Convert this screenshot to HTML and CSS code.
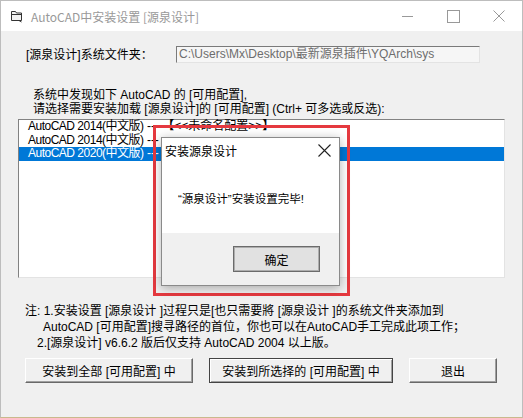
FILE: index.html
```html
<!DOCTYPE html>
<html lang="zh-CN">
<head>
    <meta charset="UTF-8">
    <title>AutoCAD中安装设置 [源泉设计]</title>
    <link rel="stylesheet" href="styles.css">
</head>
<body>
    <div class="window">
        <div class="titlebar">
            <svg class="app-icon" width="14" height="14" viewBox="0 0 14 14">
                <path d="M1.5 2.5h4l1 1.5h5v7.5h-10z" fill="#f3f3f3" stroke="#333" stroke-width="1"/>
                <path d="M1.5 5.5h10" stroke="#333" stroke-width="1"/>
                <path d="M9 11.5l2.5 1.5" stroke="#333" stroke-width="1"/>
            </svg>
            <span class="title">AutoCAD中安装设置 [源泉设计]</span>
            <div class="controls">
                <span class="ctl ctl-min"></span>
                <span class="ctl ctl-max"></span>
                <span class="ctl ctl-close">
                    <svg width="12" height="12" viewBox="0 0 12 12"><path d="M0.5 0.5l11 11M11.5 0.5l-11 11" stroke="#999" stroke-width="1"/></svg>
                </span>
            </div>
        </div>

        <div class="client">
            <div class="folder-row">
                <span class="folder-label">[源泉设计]系统文件夹：</span>
                <div class="path">C:\Users\Mx\Desktop\最新源泉插件\YQArch\sys</div>
            </div>

            <p class="prompt">系统中发现如下 AutoCAD 的 [可用配置],<br>请选择需要安装加载 [源泉设计]的 [可用配置] (Ctrl+ 可多选或反选):</p>

            <div class="listbox">
                <div class="item"><span class="name">AutoCAD 2014(中文版)</span> --- <b>【</b>&lt;&lt;未命名配置&gt;&gt;<b>】</b></div>
                <div class="item"><span class="name">AutoCAD 2014(中文版)</span> ---</div>
                <div class="item selected"><span class="name">AutoCAD 2020(中文版)</span> ---</div>
            </div>

            <div class="notes">
                <div>注: 1.安装设置 [源泉设计 ]过程只是[也只需要將 [源泉设计 ]的系统文件夹添加到</div>
                <div class="indent-1">AutoCAD [可用配置]搜寻路径的首位，你也可以在AutoCAD手工完成此项工作；</div>
                <div class="indent-2">2.[源泉设计] v6.6.2 版后仅支持 AutoCAD 2004 以上版。</div>
            </div>

            <div class="buttons">
                <button class="btn btn-all">安装到全部 [可用配置] 中</button>
                <button class="btn btn-sel default">安装到所选择的 [可用配置] 中</button>
                <button class="btn btn-exit">退出</button>
            </div>

            <div class="highlight"></div>

            <div class="dialog">
                <div class="dialog-title">
                    <span>安装源泉设计</span>
                    <svg class="dialog-close" width="13" height="13" viewBox="0 0 13 13"><path d="M0.5 0.5l12 12M12.5 0.5l-12 12" stroke="#222" stroke-width="1.1"/></svg>
                </div>
                <div class="dialog-body">“源泉设计”安装设置完毕!</div>
                <div class="dialog-footer">
                    <button class="ok-btn">确定</button>
                </div>
            </div>
        </div>
    </div>
</body>
</html>
```

FILE: styles.css
```css
* { margin: 0; padding: 0; box-sizing: border-box; }
body {
    font-family: "Liberation Sans", "Noto Sans CJK SC", sans-serif;
    font-size: 12px; color: #000; background: #fff;
}
.window {
    width: 523px; height: 418px; background: #f0f0f0;
    border: 1px solid #bdbdbd; border-bottom-color: #c9b98c;
    display: flex; flex-direction: column;
}
.titlebar {
    height: 30px; background: #fff; display: flex; align-items: center;
    padding-left: 9px; flex-shrink: 0;
}
.app-icon { margin-right: 7px; }
.title {
    font-family: "Noto Sans CJK SC", sans-serif; font-size: 12px;
    color: #999; line-height: 16px; margin-top: 1px;
}
.controls { margin-left: auto; display: flex; height: 30px; }
.ctl { width: 46px; height: 30px; display: flex; align-items: center; justify-content: center; }
.ctl-min::before { content: ""; width: 11px; height: 1px; background: #999; }
.ctl-max::before { content: ""; width: 11px; height: 11px; border: 1px solid #999; }
.client { position: relative; flex: 1; padding: 15px 0 0 0; }

.folder-row { display: flex; align-items: center; height: 17px; }
.folder-label { width: 175px; padding-left: 25px; line-height: 14px; }
.path {
    width: 304px; height: 17px; background: #f6f6f6; color: #6d6d6d;
    border: 1px solid; border-color: #7a7a7a #e3e3e3 #e3e3e3 #7a7a7a;
    padding-left: 2px; line-height: 14px; white-space: nowrap; overflow: hidden;
}
.prompt { margin: 25px 0 0 32px; line-height: 14px; }

.listbox {
    margin: 3px 0 0 17px; width: 487px; height: 159px; background: #fff;
    border: 1px solid; border-color: #828282 #e3e3e3 #e3e3e3 #828282;
}
.item { height: 13.5px; line-height: 13px; padding-left: 9px; white-space: nowrap; }
.item .name { letter-spacing: -0.5px; }
.item.selected { background: #0078d7; color: #fff; }

.notes { margin: 25px 0 0 24px; line-height: 16px; }
.indent-1 { padding-left: 18px; }
.indent-2 { padding-left: 12px; }

.buttons { display: flex; margin: 7px 0 0 24px; gap: 16px; }
.btn {
    height: 25px; font: inherit; background: #f0f0f0; color: #000;
    border: 1px solid; border-color: #fff #696969 #696969 #fff;
    box-shadow: inset -1px -1px #a0a0a0;
}
.btn-all { width: 168px; }
.btn-sel { width: 184px; }
.btn-exit { width: 88px; }
.btn.default { border-color: #444; box-shadow: inset 1px 1px #fff, inset -1px -1px #a0a0a0; }

.highlight {
    position: absolute; left: 152px; top: 94px; width: 197px; height: 171px;
    border: 3px solid #e5393f;
}
.dialog {
    position: absolute; left: 160px; top: 106px; width: 179px; height: 149px;
    background: #fff; border: 1px solid #8a8a8a;
    box-shadow: 0 2px 10px rgba(0, 0, 0, 0.3);
    display: flex; flex-direction: column;
}
.dialog-title {
    height: 25px; display: flex; align-items: center; justify-content: space-between;
    padding: 0 8px 0 3px; font-family: "Noto Sans CJK SC", sans-serif;
}
.dialog-body { flex: 1; padding: 28px 0 0 16px; font-size: 11.5px; line-height: 16px; }
.dialog-footer {
    height: 52px; background: #f0f0f0; display: flex; justify-content: flex-end;
    align-items: flex-start; padding: 13px 19px 0 0;
}
.ok-btn {
    width: 87px; height: 26px; background: #e1e1e1; font: 12px "Noto Sans CJK SC", sans-serif;
    border: 1px solid #6b6b6b; box-shadow: inset 0 0 0 1px #adadad;
}
```
